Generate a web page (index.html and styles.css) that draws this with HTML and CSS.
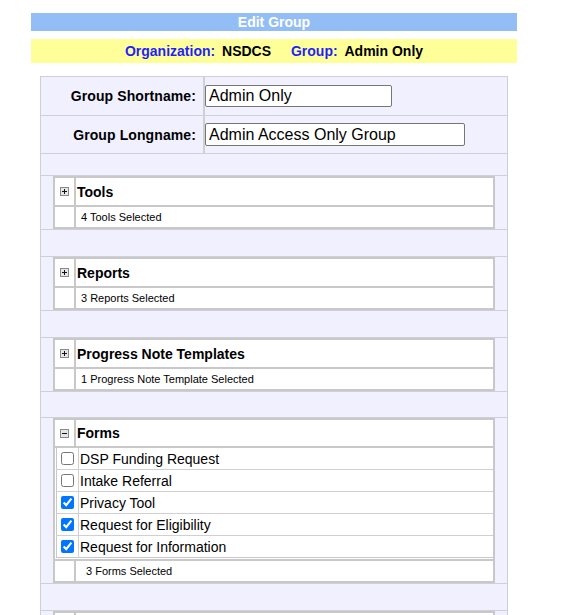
FILE: index.html
```html
<!DOCTYPE html>
<html>
<head>
<meta charset="utf-8">
<title>Edit Group</title>
<link rel="stylesheet" href="styles.css">
</head>
<body>
<div class="title">Edit Group</div>
<div class="info"><span class="k">Organization:</span> <span class="v">NSDCS</span> <span class="k gap">Group:</span> <span class="v">Admin Only</span></div>
<div class="main">
  <div class="frow r1">
    <div class="flabel">Group Shortname:</div>
    <div class="fval"><input class="in short" type="text" value="Admin Only"></div>
  </div>
  <div class="frow r2">
    <div class="flabel">Group Longname:</div>
    <div class="fval"><input class="in long" type="text" value="Admin Access Only Group"></div>
  </div>
  <div class="spacer first"></div>

  <div class="sec">
    <table class="st">
      <tr class="hd"><td class="ic"><svg class="tog" width="9" height="9" viewBox="0 0 9 9"><rect x="0.5" y="0.5" width="8" height="8" fill="#e6e6e6" stroke="#8a8a8a"/><path d="M2 4.5h5M4.5 2v5" stroke="#111" stroke-width="1"/></svg></td><td class="ht">Tools</td></tr>
      <tr class="sub"><td class="ic"></td><td class="sel">4 Tools Selected</td></tr>
    </table>
  </div>
  <div class="spacer"></div>

  <div class="sec">
    <table class="st">
      <tr class="hd"><td class="ic"><svg class="tog" width="9" height="9" viewBox="0 0 9 9"><rect x="0.5" y="0.5" width="8" height="8" fill="#e6e6e6" stroke="#8a8a8a"/><path d="M2 4.5h5M4.5 2v5" stroke="#111" stroke-width="1"/></svg></td><td class="ht">Reports</td></tr>
      <tr class="sub"><td class="ic"></td><td class="sel">3 Reports Selected</td></tr>
    </table>
  </div>
  <div class="spacer"></div>

  <div class="sec">
    <table class="st">
      <tr class="hd"><td class="ic"><svg class="tog" width="9" height="9" viewBox="0 0 9 9"><rect x="0.5" y="0.5" width="8" height="8" fill="#e6e6e6" stroke="#8a8a8a"/><path d="M2 4.5h5M4.5 2v5" stroke="#111" stroke-width="1"/></svg></td><td class="ht">Progress Note Templates</td></tr>
      <tr class="sub"><td class="ic"></td><td class="sel">1 Progress Note Template Selected</td></tr>
    </table>
  </div>
  <div class="spacer short"></div>

  <div class="sec">
    <table class="st">
      <tr class="hd slim"><td class="ic"><svg class="tog" width="9" height="9" viewBox="0 0 9 9"><rect x="0.5" y="0.5" width="8" height="8" fill="#e6e6e6" stroke="#8a8a8a"/><path d="M2 4.5h5" stroke="#111" stroke-width="1"/></svg></td><td class="ht">Forms</td></tr>
      <tr class="items"><td class="box" colspan="2">
        <table class="ct">
          <tr><td class="cb"><input type="checkbox"></td><td class="cl">DSP Funding Request</td></tr>
          <tr><td class="cb"><input type="checkbox"></td><td class="cl">Intake Referral</td></tr>
          <tr><td class="cb"><input type="checkbox" checked></td><td class="cl">Privacy Tool</td></tr>
          <tr><td class="cb"><input type="checkbox" checked></td><td class="cl">Request for Eligibility</td></tr>
          <tr><td class="cb"><input type="checkbox" checked></td><td class="cl">Request for Information</td></tr>
        </table>
      </td></tr>
      <tr class="sub"><td class="ic"></td><td class="sel wide">3 Forms Selected</td></tr>
    </table>
  </div>
  <div class="spacer"></div>

  <div class="sec">
    <table class="st">
      <tr class="hd"><td class="ic"></td><td class="ht">&nbsp;</td></tr>
      <tr class="sub"><td class="ic"></td><td class="sel">&nbsp;</td></tr>
    </table>
  </div>
</div>
</body>
</html>
```

FILE: styles.css
```css
html, body {
  margin: 0;
  padding: 0;
  background: #ffffff;
}
body {
  font-family: "Liberation Sans", Arial, sans-serif;
  color: #000;
}
.title {
  margin: 13px 0 0 31px;
  width: 486px;
  height: 18px;
  line-height: 18px;
  background: #93bef5;
  color: #ffffff;
  font-weight: bold;
  font-size: 14px;
  text-align: center;
}
.info {
  margin: 8px 0 0 31px;
  width: 486px;
  height: 24px;
  line-height: 24px;
  background: #ffff99;
  font-weight: bold;
  font-size: 14px;
  text-align: center;
  word-spacing: 3px;
}
.info .k { color: #1f1fff; }
.info .v { color: #000; word-spacing: 0; }
.info .gap { margin-left: 13px; }

.main {
  margin: 13px 0 0 40px;
  width: 466px;
  background: #f0f0ff;
  border: 1px solid #cfcfd6;
  border-bottom: none;
}
.frow {
  display: flex;
  border-bottom: 1px solid #cfcfd6;
}
.frow.r1 { height: 38px; }
.frow.r2 { height: 37px; }
.flabel {
  width: 155px;
  padding-right: 7px;
  border-right: 2px solid #cfcfd6;
  display: flex;
  align-items: center;
  justify-content: flex-end;
  font-weight: bold;
  font-size: 14px;
  letter-spacing: 0.1px;
}
.fval {
  flex: 1;
  display: flex;
  align-items: center;
}
.in {
  box-sizing: border-box;
  border: 1px solid #767676;
  border-radius: 2px;
  padding: 0 3px;
  margin: 0;
  font-family: "Liberation Sans", Arial, sans-serif;
  font-size: 16px;
  color: #000;
  background: #fff;
}
.in.short { width: 187px; height: 22px; }
.in.long { width: 260px; height: 23px; }

.spacer {
  height: 26px;
  border-bottom: 1px solid #cfcfd6;
}
.spacer.first { height: 21px; }
.spacer.short { height: 25px; }

.sec {
  padding: 0 12px;
  border-bottom: 1px solid #cfcfd6;
}
.st {
  width: 100%;
  border-collapse: separate;
  border-spacing: 0;
  border: 1px solid #c8c8c8;
  background: #ffffff;
}
.st > tbody > tr > td {
  border: 1px solid #c8c8c8;
  padding: 0;
}
.st td.ic {
  width: 19px;
  text-align: center;
  vertical-align: middle;
}
.tog { display: block; margin: 0 auto; }
.hd > td { height: 27px; }
.hd.slim > td { height: 26px; }
.ht {
  font-weight: bold;
  font-size: 14px;
  padding-left: 1px !important;
  vertical-align: middle;
}
.sub > td { height: 20px; }
.sel {
  font-size: 11px;
  padding-left: 5px !important;
  vertical-align: middle;
}
.sel.wide { padding-left: 10px !important; }

.st td.box {
  padding: 0 0 1px 1px !important;
}
.ct {
  width: 100%;
  border-collapse: collapse;
  border-left: 1px solid #c8c8c8;
  border-bottom: 1px solid #c8c8c8;
}
.ct td {
  height: 21px;
  border-bottom: 1px solid #d0d0d0;
  padding: 0;
  vertical-align: middle;
}
.ct tr:last-child td { border-bottom: none; }
.ct td.cb {
  width: 17px;
  padding-left: 4px;
  border-right: 1px solid #d0d0d0;
}
.ct td.cb input {
  display: block;
  margin: 0;
  width: 13px;
  height: 13px;
}
.ct td.cl {
  font-size: 14px;
  padding-left: 1px;
}
```
